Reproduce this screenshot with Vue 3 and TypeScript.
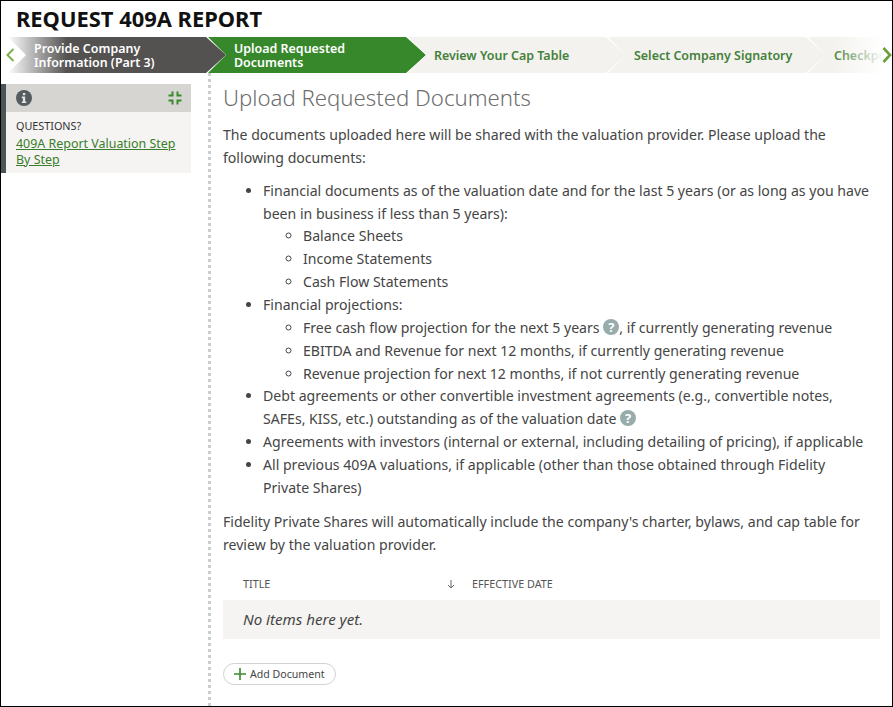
<script setup lang="ts">
interface Step { label: string; kind: string }
const steps: Step[] = [
  { label: 'Provide Company Information (Part 3)', kind: 'done' },
  { label: 'Upload Requested Documents', kind: 'active' },
  { label: 'Review Your Cap Table', kind: 'todo' },
  { label: 'Select Company Signatory', kind: 'todo' },
  { label: 'Checkpoint', kind: 'todo' },
]
</script>

<template>
  <div class="page">
    <h1 class="title">REQUEST 409A REPORT</h1>
    <div class="stepper">
      <div class="track">
        <div v-for="s in steps" :key="s.label" class="step" :class="s.kind"><span>{{ s.label }}</span></div>
      </div>
      <div class="fade left"></div>
      <div class="fade right"></div>
      <svg class="arrow al" width="12" height="20" viewBox="0 0 12 20"><path d="M8.5 4 2.5 10l6 6" fill="none" stroke="#7fb04f" stroke-width="2"/></svg>
      <svg class="arrow ar" width="12" height="20" viewBox="0 0 12 20"><path d="M3.5 3l6.5 7-6.5 7" fill="none" stroke="#6a9f3a" stroke-width="2.6"/></svg>
    </div>
    <div class="body">
      <aside class="side">
        <div class="card">
          <div class="card-head">
            <svg width="16" height="16" viewBox="0 0 16 16"><circle cx="8" cy="8" r="8" fill="#545c60"/><rect x="6.9" y="3" width="2.4" height="2.2" fill="#e4e3e0"/><path d="M5.8 6.6h3.4v4.8h1.1V13H5.8v-1.6h1.1V8.2H5.8z" fill="#e4e3e0"/></svg>
            <svg width="14" height="14" viewBox="0 0 14 14"><path d="M4.5 0.5v4H0.5M9.5 0.5v4H13.5M4.5 13.5v-4H0.5M9.5 13.5v-4H13.5" fill="none" stroke="#3a8a2b" stroke-width="2"/></svg>
          </div>
          <div class="card-body">
            <div class="q">QUESTIONS?</div>
            <a class="link" href="#">409A Report Valuation Step By Step</a>
          </div>
        </div>
      </aside>
      <div class="divider"></div>
      <main class="main">
        <h2 class="heading">Upload Requested Documents</h2>
        <p>The documents uploaded here will be shared with the valuation provider. Please upload the following documents:</p>
        <ul>
          <li>Financial documents as of the valuation date and for the last 5 years (or as long as you have been in business if less than 5 years):
            <ul>
              <li>Balance Sheets</li>
              <li>Income Statements</li>
              <li>Cash Flow Statements</li>
            </ul>
          </li>
          <li>Financial projections:
            <ul>
              <li>Free cash flow projection for the next 5 years <span class="help">?</span>, if currently generating revenue</li>
              <li>EBITDA and Revenue for next 12 months, if currently generating revenue</li>
              <li>Revenue projection for next 12 months, if not currently generating revenue</li>
            </ul>
          </li>
          <li>Debt agreements or other convertible investment agreements (e.g., convertible notes, SAFEs, KISS, etc.) outstanding as of the valuation date <span class="help">?</span></li>
          <li>Agreements with investors (internal or external, including detailing of pricing), if applicable</li>
          <li>All previous 409A valuations, if applicable (other than those obtained through Fidelity Private Shares)</li>
        </ul>
        <p>Fidelity Private Shares will automatically include the company's charter, bylaws, and cap table for review by the valuation provider.</p>
        <div class="thead">
          <div class="th first"><span>TITLE</span>
            <svg width="8" height="9" viewBox="0 0 8 9"><path d="M4 0v8M1 5l3 3 3-3" fill="none" stroke="#666" stroke-width="1"/></svg>
          </div>
          <div class="th second">EFFECTIVE DATE</div>
        </div>
        <div class="empty">No items here yet.</div>
        <button class="add" type="button">
          <svg width="12" height="12" viewBox="0 0 12 12"><path d="M6 0v12M0 6h12" stroke="#3a8a2b" stroke-width="1.6"/></svg>
          <span>Add Document</span>
        </button>
      </main>
    </div>
  </div>
</template>

<style>
html, body { margin: 0; background: #fff; }
</style>

<style scoped>
.page {
  box-sizing: border-box;
  width: 893px;
  height: 707px;
  border: 1px solid #000;
  overflow: hidden;
  display: flex;
  flex-direction: column;
  font-family: "Noto Sans", "Lato", sans-serif;
  font-size: 14.1px;
  line-height: 22.86px;
  color: #454545;
}
.title {
  margin: 0;
  padding: 4px 0 0 15px;
  height: 32px;
  box-sizing: border-box;
  font-size: 21.9px;
  line-height: 28px;
  font-weight: 700;
  color: #111;
}
.stepper { position: relative; height: 36px; overflow: hidden; margin-top: 4px; }
.track { display: flex; padding-left: 7px; }
.step {
  flex: 0 0 218px;
  margin-right: -18px;
  height: 36px;
  box-sizing: border-box;
  padding: 1px 30px 0 26px;
  display: flex;
  align-items: center;
  clip-path: polygon(0 0, 198px 0, 100% 50%, 198px 100%, 0 100%, 18px 50%);
  font-size: 12.45px;
  line-height: 14px;
  font-weight: 600;
}
.step.todo span { white-space: nowrap; }
.done { background: #545251; color: #fff; }
.active { background: #37882b; color: #fff; }
.todo { background: #f3f2ee; color: #44803a; }
.fade { position: absolute; top: 0; bottom: 0; }
.fade.left { left: 0; width: 66px; background: linear-gradient(to right, #fff 10%, rgba(255,255,255,0)); }
.fade.right { right: 0; width: 60px; background: linear-gradient(to left, #fff 12%, rgba(255,255,255,0)); }
.arrow { position: absolute; top: 8px; }
.al { left: 4px; }
.ar { right: 0; }
.body { flex: 1; display: flex; min-height: 0; }
.side { width: 190px; flex: none; padding-top: 11px; }
.card { border-left: 5px solid #4b5558; }
.card-head {
  height: 28px;
  background: #d6d5d1;
  display: flex;
  align-items: center;
  justify-content: space-between;
  padding: 0 9px 0 10px;
}
.card-body { background: #f5f4f2; padding: 6px 10px 5px; height: 61px; box-sizing: border-box; }
.q { font-size: 10.8px; line-height: 16px; color: #333; }
.link { display: block; font-size: 12.45px; line-height: 16px; color: #3a7d2c; text-decoration: underline; margin-top: 2px; }
.divider {
  width: 3px;
  flex: none;
  margin-left: 17px;
  background: repeating-linear-gradient(to bottom, #c9cfcf 0 3px, transparent 3px 6px);
}
.main { flex: 1; padding: 9px 12px 0 12px; min-width: 0; }
.heading { margin: 0 0 10px; font-size: 22.2px; line-height: 32px; font-weight: 300; color: #6e6e6e; }
p { margin: 0 0 10px; }
ul { margin: 0; padding-left: 40px; }
main > ul { margin-bottom: 11px; padding-right: 6px; }
.help {
  display: inline-block;
  width: 16px;
  height: 16px;
  line-height: 16px;
  border-radius: 50%;
  background: #98acac;
  color: #fff;
  text-align: center;
  font-size: 13px;
  font-weight: 700;
  vertical-align: 1px;
}
.thead { display: grid; grid-template-columns: 239px 1fr; height: 24px; align-items: center; margin-top: 16px; font-size: 10.8px; color: #555; }
.th.first { display: flex; justify-content: space-between; align-items: center; padding: 0 7px 0 20px; }
.th.second { padding-left: 10px; }
.empty { height: 39px; background: #f5f4f2; padding-left: 20px; line-height: 39px; font-style: italic; font-size: 15.1px; color: #444; margin-top: 4px; }
.add {
  margin-top: 24px;
  height: 22px;
  width: 113px;
  box-sizing: border-box;
  display: flex;
  align-items: center;
  gap: 4px;
  padding: 0 0 0 10px;
  background: #fff;
  border: 1px solid #d2d2d0;
  border-radius: 11px;
  font-family: inherit;
  font-size: 10.6px;
  color: #444;
}
</style>
